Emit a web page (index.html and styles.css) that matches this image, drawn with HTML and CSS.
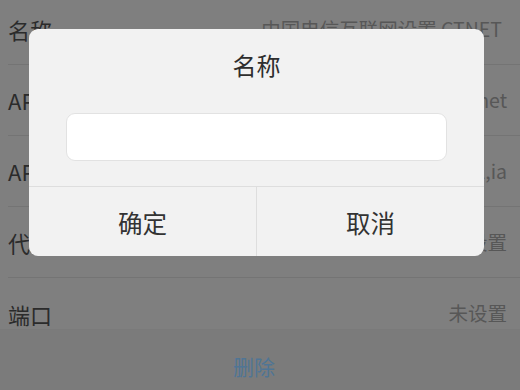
FILE: index.html
```html
<!DOCTYPE html>
<html lang="zh-CN">
<head>
<meta charset="utf-8">
<link rel="stylesheet" href="styles.css">
</head>
<body>
<div class="page">
  <div class="list">
    <div class="row row-first"><span class="label">名称</span><span class="value">中国电信互联网设置 CTNET</span></div>
    <div class="row"><span class="label">APN</span><span class="value">ctnet</span></div>
    <div class="row"><span class="label">APN类型</span><span class="value">default,supl,ia</span></div>
    <div class="row"><span class="label">代理</span><span class="value">未设置</span></div>
    <div class="row row-last"><span class="label">端口</span><span class="value">未设置</span></div>
  </div>
  <div class="delete">删除</div>

  <div class="dialog">
    <div class="dialog-title">名称</div>
    <div class="dialog-input"></div>
    <div class="dialog-buttons">
      <div class="btn">确定</div>
      <div class="btn btn-right">取消</div>
    </div>
  </div>
</div>
</body>
</html>
```
FILE: styles.css
```css
* { box-sizing: border-box; }
html, body { margin: 0; padding: 0; }
body {
  width: 520px;
  height: 390px;
  overflow: hidden;
  background: #7f7f7f;
  font-family: "Noto Sans CJK SC", "Noto Sans", sans-serif;
}
.page {
  position: relative;
  width: 520px;
  height: 390px;
}
.list {
  display: flex;
  flex-direction: column;
}
.row {
  height: 71px;
  margin-left: 8px;
  padding-right: 13px;
  border-bottom: 1px solid #747474;
  display: flex;
  align-items: center;
  justify-content: space-between;
}
.row-first {
  height: 65px;
  padding-bottom: 6px;
  padding-right: 18px;
}
.row-last {
  height: 52px;
  margin-left: 0;
  padding-left: 8px;
  align-items: flex-start;
  padding-top: 21px;
  border-bottom: 1px solid #7a7a7a;
}
.label {
  font-size: 22px;
  line-height: 30px;
  color: #2b2b2b;
}
.value {
  font-size: 19.5px;
  line-height: 28px;
  color: #575757;
}
.delete {
  background: #7b7b7b;
  height: 61px;
  text-align: center;
  font-size: 21px;
  line-height: 30px;
  padding-top: 21px;
  color: #4f7595;
  padding-right: 12px;
}
.dialog {
  position: absolute;
  left: 29px;
  top: 29px;
  width: 455px;
  height: 227px;
  background: #f2f2f2;
  border-radius: 9px;
  display: flex;
  flex-direction: column;
  overflow: hidden;
}
.dialog-title {
  margin-top: 20px;
  text-align: center;
  font-size: 24px;
  line-height: 32px;
  color: #2e2e2e;
}
.dialog-input {
  margin: 32px 37px 0 37px;
  height: 48px;
  background: #ffffff;
  border: 1px solid #e2e2e2;
  border-radius: 9px;
}
.dialog-buttons {
  margin-top: 25px;
  flex: 1;
  display: flex;
  border-top: 1px solid #dedede;
}
.btn {
  flex: 1;
  display: flex;
  align-items: center;
  justify-content: center;
  font-size: 24.5px;
  color: #333333;
  padding-top: 2px;
}
.btn-right {
  border-left: 1px solid #dedede;
}
```
